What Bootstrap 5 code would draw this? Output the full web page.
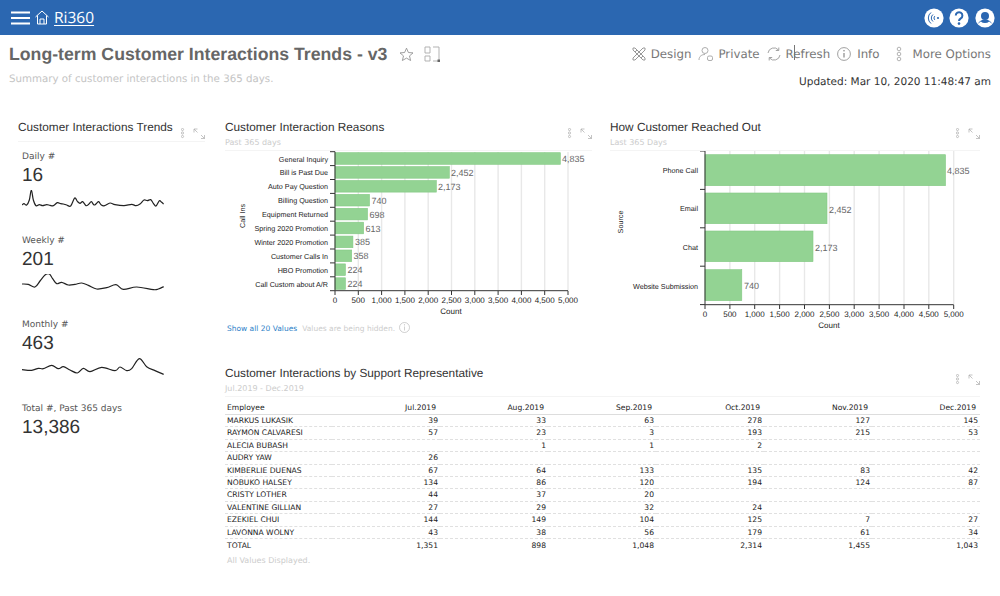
<!doctype html>
<html lang="en"><head><meta charset="utf-8"><title>Ri360</title>
<link rel="stylesheet" href="https://cdn.jsdelivr.net/npm/bootstrap@5.3.0/dist/css/bootstrap.min.css">
<style>
html,body{height:596px;overflow:hidden;background:#fff}
body{font-family:"DejaVu Sans",sans-serif;color:#444;text-rendering:geometricPrecision}
.topbar{height:35px;background:#2b67b1;padding:0 5px 0 10px}
.brand-link{font-size:15.5px;color:#fff;text-decoration:underline;font-family:"Open Sans",sans-serif;margin-left:5px;text-underline-offset:2px}
.pagehead{height:84px;padding:0 9px;position:relative}
.page-title{font:bold 17.7px "Liberation Sans",sans-serif;color:#666;margin:0;line-height:24px}
.page-sub{font-size:10.25px;color:#c4c4c4;margin-top:7px;line-height:13px}
.tool-txt{font-size:11.8px;color:#777;line-height:16px}
.updated{font-size:10.5px;color:#333;line-height:13px;margin-top:14px;text-align:right}
.caret-mark{position:absolute;left:794px;top:10px;width:1px;height:15px;background:#777}
.board{padding-left:18px;padding-right:20px;gap:20px}
.leftcol{width:187px;flex:none}
.rightcol{width:755px;flex:none}
.ptitle{font:11.8px/16px "Liberation Sans",sans-serif;color:#333;margin:0;white-space:nowrap}
.psub{font-size:8px;line-height:10px;color:#ccc;margin-top:3px}
.phead{height:32px;border-bottom:1px solid #f4f4f4}
.phead-left{height:23px;border-bottom:1px solid #f4f4f4}
.pico{margin-left:auto;display:block;flex:none;margin-top:9px}
.chartA{width:367px}.chartB{width:370px}
.chartsvg{display:block}
.chartsvg text{font-family:"Liberation Sans",sans-serif;font-size:8px;fill:#222}
.chartsvg .cat{font-size:7.2px}
.chartsvg .val{font-size:9px;fill:#666}
.bar{fill:#93d393;stroke:#82c882;stroke-width:.6}
.grid{stroke:#e8e8e8;stroke-width:1.4}
.ax{stroke:#333;stroke-width:1;fill:none}
.showline{font-size:7.5px;line-height:12px;margin-top:7px;padding-left:2px}
.showlink{color:#2d7fc8;text-decoration:none}
.hidden-note{color:#ccc;margin-left:5px}
.metric{height:84px;padding-left:4px}
.mlabel{font-size:9px;line-height:12px;color:#555}
.mnum{font:19px/24px "Liberation Sans",sans-serif;color:#333;margin-top:1px}
.spark{display:block;fill:none;stroke:#222;stroke-width:3.6px;stroke-linejoin:round;margin-top:2px}
.repsec{margin-top:30px}
.reptable{font-size:7.6px;color:#333;table-layout:fixed;width:755px;margin:0;--bs-table-bg:transparent}
.reptable th,.reptable td{padding:0 2px;line-height:11.4px;height:12.4px;border:0;border-bottom:1px dashed #e0e0e0;font-weight:400;color:#222;white-space:nowrap}
.reptable thead th{padding-bottom:1px;padding-top:4.5px;height:auto;border-bottom:1px solid #ddd}
.reptable th.hnum{padding-right:4px}
.reptable tfoot td{border-bottom:0;padding-top:0;height:13px}
.allvals{font-size:8px;color:#ccc;margin-top:5px;line-height:10px;padding-left:2px}
</style></head>
<body>
<nav class="navbar topbar d-flex align-items-center justify-content-between flex-nowrap">
 <div class="d-flex align-items-center">
  <svg width="20" height="14" viewBox="0 0 20 14" style="margin-left:1px"><path d="M0 1.5h19M0 7h19M0 12.5h19" stroke="#fff" stroke-width="2"/></svg>
  <svg width="14" height="15" viewBox="0 0 14 15" fill="none" stroke="#fff" stroke-width="1" style="margin-left:4px"><path d="M.5 7 7 1l6.500 6M2.500 5.500V14h9V5.500M5 14V9h4v5"/></svg>
  <a href="#" class="brand-link">Ri360</a>
 </div>
 <div class="d-flex align-items-center" style="gap:5.7px">
  <svg width="20" height="20" viewBox="0 0 20 20"><circle cx="10" cy="10" r="9.6" fill="#fff"/><g fill="none" stroke="#2b67b1" stroke-width="1"><path d="M9 6.5a4.5 4.5 0 0 0 0 7"/><path d="M7 4.5a7 7 0 0 0 0 11"/><path d="M11 8a2.5 2.5 0 0 0 0 4"/></g><circle cx="14" cy="10" r="1.1" fill="#2b67b1"/></svg>
  <svg width="20" height="20" viewBox="0 0 20 20"><circle cx="10" cy="10" r="9.6" fill="#fff"/><path d="M6.8 7.6a3.3 3.3 0 1 1 5 2.8c-1.2.8-1.8 1.3-1.8 2.6" fill="none" stroke="#2b67b1" stroke-width="2"/><circle cx="10" cy="15.6" r="1.3" fill="#2b67b1"/></svg>
  <svg width="20" height="20" viewBox="0 0 20 20"><circle cx="10" cy="10" r="9.6" fill="#fff"/><circle cx="10" cy="8" r="4" fill="#2b67b1"/><path d="M2.8 16a8 8 0 0 1 14.4 0 10 10 0 0 0-3-2.6 6 6 0 0 1-8.4 0 10 10 0 0 0-3 2.6z" fill="#2b67b1"/></svg>
 </div>
</nav>
<header class="pagehead d-flex justify-content-between">
 <div style="padding-top:7px">
  <div class="d-flex align-items-center">
   <h1 class="page-title">Long-term Customer Interactions Trends - v3</h1>
   <svg width="15" height="15" viewBox="0 0 15 15" fill="none" stroke="#888" stroke-width=".8" style="margin-left:12px"><path d="M7.5 1.2 9.4 5.500l4.600.4-3.500 3 1.100 4.600-4.100-2.400-4.100 2.400 1.100-4.600L1 5.900l4.600-.4z"/></svg>
   <svg width="17" height="17" viewBox="0 0 17 17" fill="none" stroke="#aaa" stroke-width=".9" style="margin-left:10px"><path d="M1 1h5v6H1zM1 10h5v5H1zM9 1h6v14H9"/><rect x="13.5" y="13.5" width="2.5" height="2.5" fill="#666" stroke="none"/></svg>
  </div>
  <p class="page-sub mb-0">Summary of customer interactions in the 365 days.</p>
 </div>
 <div style="padding-top:11px">
  <div class="d-flex align-items-center">
   <svg width="16" height="16" viewBox="0 0 16 16" fill="none" stroke="#999" stroke-width="1"><path d="M2 2h2l10 10v2h-2L2 4zM14 2h-2L2 12v2h2L14 4zM4 6 6 4M10 12l2-2"/></svg>
   <span class="tool-txt" style="margin-left:4px">Design</span>
   <svg width="16" height="16" viewBox="0 0 16 16" fill="none" stroke="#999" stroke-width=".8" style="margin-left:7px"><circle cx="7" cy="4.5" r="3"/><path d="M1 14c0-4 3-5.500 6-5.500"/><rect x="9.500" y="10" width="5" height="4.500" rx="1.500"/></svg>
   <span class="tool-txt" style="margin-left:4px">Private</span>
   <svg width="16" height="16" viewBox="0 0 16 16" fill="none" stroke="#999" stroke-width=".9" style="margin-left:6px"><path d="M2 7a6 6 0 0 1 10.500-3M14 9a6 6 0 0 1-10.500 3M12.800 1.500v3h-3M3.200 14.500v-3h3"/></svg>
   <span class="tool-txt" style="margin-left:4px">Refresh</span>
   <svg width="14" height="14" viewBox="0 0 14 14" fill="none" stroke="#888" stroke-width=".8" style="margin-left:7px"><circle cx="7" cy="7" r="6.4"/><path d="M7 6v4.500" stroke-width="1.2"/><circle cx="7" cy="3.800" r=".8" fill="#888" stroke="none"/></svg>
   <span class="tool-txt" style="margin-left:6px">Info</span>
   <svg width="6" height="16" viewBox="0 0 6 16" fill="none" stroke="#aaa" stroke-width=".9" style="margin-left:17px"><circle cx="3" cy="3" r="1.8"/><circle cx="3" cy="8" r="1.8"/><circle cx="3" cy="13" r="1.8"/></svg>
   <span class="tool-txt" style="margin-left:10px">More Options</span>
  </div>
  <div class="updated">Updated: Mar 10, 2020 11:48:47 am</div>
 </div>
 <span class="caret-mark"></span>
</header>
<main class="board d-flex">
 <section class="leftcol">
  <div class="d-flex phead-left">
   <h2 class="ptitle">Customer Interactions Trends</h2>
   <svg class="pico" width="24" height="11" viewBox="0 0 24 11" fill="none" stroke="#aaa" stroke-width=".7"><circle cx="1.500" cy="1.500" r="1.100"/><circle cx="1.500" cy="5" r="1.100"/><circle cx="1.500" cy="8.500" r="1.100"/><path d="M13 1h3.500M13 1v3.500M13 1l3.500 3.500M23.500 10.500H20M23.500 10.500V7M23.500 10.500 20 7"/></svg>
  </div>
  <div class="metric" style="margin-top:9px">
   <div class="mlabel">Daily #</div><div class="mnum">16</div>
   <svg class="spark" width="142" height="28" viewBox="0 0 426 84"><path d="M0 45 6 41 14 45 22 30 28 0 34 30 42 47 52 44 62 47 74 44 84 46 94 47 106 38 116 41 124 42 134 45 146 48 158 24 166 34 174 40 182 35 192 47 200 43 208 35 216 45 224 40 230 35 238 45 248 47 264 39 279 44 306 47 329 43 342 47 354 42 366 30 376 32 386 29 394 40 402 48 412 32 419 37 425 42"/></svg>
  </div>
  <div class="metric">
   <div class="mlabel">Weekly #</div><div class="mnum">201</div>
   <svg class="spark" width="142" height="28" viewBox="0 0 426 84"><path d="M0 30 19 31 39 39 54 21 69 3 82 0 92 14 104 29 119 25 139 33 159 31 179 27 199 34 224 45 254 41 282 32 304 46 344 39 394 47 409 45 425 38"/></svg>
  </div>
  <div class="metric">
   <div class="mlabel">Monthly #</div><div class="mnum">463</div>
   <svg class="spark" width="142" height="28" viewBox="0 0 426 84"><path d="M0 35 29 37 49 31 64 32 89 22 109 32 124 26 144 36 166 45 184 31 204 41 239 28 279 38 294 27 314 38 329 32 352 2 374 26 399 38 425 49"/></svg>
  </div>
  <div class="metric">
   <div class="mlabel">Total #, Past 365 days</div><div class="mnum">13,386</div>
  </div>
 </section>
 <section class="rightcol">
  <div class="d-flex" style="gap:18px">
   <div class="chartA">
    <div class="d-flex phead">
     <div><h2 class="ptitle">Customer Interaction Reasons</h2><div class="psub">Past 365 days</div></div>
     <svg class="pico" width="24" height="11" viewBox="0 0 24 11" fill="none" stroke="#aaa" stroke-width=".7"><circle cx="1.500" cy="1.500" r="1.100"/><circle cx="1.500" cy="5" r="1.100"/><circle cx="1.500" cy="8.500" r="1.100"/><path d="M13 1h3.500M13 1v3.500M13 1l3.500 3.500M23.500 10.500H20M23.500 10.500V7M23.500 10.500 20 7"/></svg>
    </div>
    <svg class="chartsvg" width="365" height="165" viewBox="0 0 365 165">
     <path class="grid" d="M133.300 1V140M156.600 1V140M179.900 1V140M203.200 1V140M226.500 1V140M249.800 1V140M273.100 1V140M296.400 1V140M319.700 1V140M343 1V140"/>
     <g class="bars">
      <rect class="bar" x="110" y="1.700" width="225.300" height="11.600"/><rect class="bar" x="110" y="15.600" width="114.300" height="11.600"/><rect class="bar" x="110" y="29.500" width="101.300" height="11.600"/><rect class="bar" x="110" y="43.400" width="34.500" height="11.600"/><rect class="bar" x="110" y="57.300" width="32.500" height="11.600"/><rect class="bar" x="110" y="71.200" width="28.600" height="11.600"/><rect class="bar" x="110" y="85.100" width="17.900" height="11.600"/><rect class="bar" x="110" y="99" width="16.700" height="11.600"/><rect class="bar" x="110" y="112.900" width="10.400" height="11.600"/><rect class="bar" x="110" y="126.800" width="10.400" height="11.600"/>
     </g>
     <path class="ax" d="M105 .7h5V139.700H343M105 14.600h5M105 28.500h5M105 42.400h5M105 56.300h5M105 70.200h5M105 84.100h5M105 98h5M105 111.900h5M105 125.800h5M105 139.700h5M110 140v4M133.300 140v4M156.600 140v4M179.900 140v4M203.200 140v4M226.500 140v4M249.800 140v4M273.100 140v4M296.400 140v4M319.700 140v4M343 140v4"/>
     <g text-anchor="end">
      <text class="cat" x="103" y="10.500">General Inquiry</text><text class="cat" x="103" y="24.400">Bill is Past Due</text><text class="cat" x="103" y="38.300">Auto Pay Question</text><text class="cat" x="103" y="52.200">Billing Question</text><text class="cat" x="103" y="66.100">Equipment Returned</text><text class="cat" x="103" y="80">Spring 2020 Promotion</text><text class="cat" x="103" y="93.900">Winter 2020 Promotion</text><text class="cat" x="103" y="107.800">Customer Calls In</text><text class="cat" x="103" y="121.700">HBO Promotion</text><text class="cat" x="103" y="135.600">Call Custom about A/R</text>
     </g>
     <g class="vals">
      <text class="val" x="337" y="11">4,835</text><text class="val" x="226" y="25">2,452</text><text class="val" x="213" y="39">2,173</text><text class="val" x="146.500" y="52.500">740</text><text class="val" x="144.500" y="66.500">698</text><text class="val" x="140.500" y="80.500">613</text><text class="val" x="130" y="94">385</text><text class="val" x="128.500" y="108">358</text><text class="val" x="122.500" y="122">224</text><text class="val" x="122.500" y="136">224</text>
     </g>
     <g text-anchor="middle">
      <text x="110" y="152">0</text><text x="133.300" y="152">500</text><text x="156.600" y="152">1,000</text><text x="179.900" y="152">1,500</text><text x="203.200" y="152">2,000</text><text x="226.500" y="152">2,500</text><text x="249.800" y="152">3,000</text><text x="273.100" y="152">3,500</text><text x="296.400" y="152">4,000</text><text x="319.700" y="152">4,500</text><text x="343" y="152">5,000</text>
      <text x="226" y="163">Count</text>
      <text class="cat" transform="translate(20 65) rotate(-90)">Call Ins</text>
     </g>
    </svg>
    <div class="showline d-flex align-items-center"><a href="#" class="showlink">Show all 20 Values</a><span class="hidden-note">Values are being hidden.</span>
     <svg width="11" height="11" viewBox="0 0 11 11" fill="none" stroke="#bbb" stroke-width=".7" style="margin-left:4px;margin-top:-3px"><circle cx="5.500" cy="5.500" r="5"/><path d="M5.500 4.500v4"/><circle cx="5.500" cy="2.800" r=".6" fill="#bbb" stroke="none"/></svg></div>
   </div>
   <div class="chartB">
    <div class="d-flex phead">
     <div><h2 class="ptitle">How Customer Reached Out</h2><div class="psub">Last 365 Days</div></div>
     <svg class="pico" width="24" height="11" viewBox="0 0 24 11" fill="none" stroke="#aaa" stroke-width=".7"><circle cx="1.500" cy="1.500" r="1.100"/><circle cx="1.500" cy="5" r="1.100"/><circle cx="1.500" cy="8.500" r="1.100"/><path d="M13 1h3.500M13 1v3.500M13 1l3.500 3.500M23.500 10.500H20M23.500 10.500V7M23.500 10.500 20 7"/></svg>
    </div>
    <svg class="chartsvg" width="370" height="182" viewBox="0 0 370 182">
     <path class="grid" d="M119.900 0V154M144.700 0V154M169.600 0V154M194.500 0V154M219.400 0V154M244.200 0V154M269.100 0V154M294 0V154M318.800 0V154M343.700 0V154"/>
     <rect class="bar" x="95" y="3.700" width="240.500" height="31"/><rect class="bar" x="95" y="42" width="122" height="30.700"/><rect class="bar" x="95" y="80" width="108" height="30.700"/><rect class="bar" x="95" y="118.700" width="36.800" height="31"/>
     <path class="ax" d="M90 0h5V153.700H343.700M90 38.400h5M90 76.800h5M90 115.200h5M90 153.600h5M95 154v4M119.900 154v4M144.700 154v4M169.600 154v4M194.500 154v4M219.400 154v4M244.200 154v4M269.100 154v4M294 154v4M318.800 154v4M343.700 154v4"/>
     <g text-anchor="end"><text class="cat" x="88" y="22">Phone Call</text><text class="cat" x="88" y="60">Email</text><text class="cat" x="88" y="99">Chat</text><text class="cat" x="88" y="137.500">Website Submission</text></g>
     <text class="val" x="337" y="23">4,835</text><text class="val" x="219" y="61.500">2,452</text><text class="val" x="205" y="100">2,173</text><text class="val" x="134" y="138">740</text>
     <g text-anchor="middle">
      <text x="95" y="166">0</text><text x="119.900" y="166">500</text><text x="144.700" y="166">1,000</text><text x="169.600" y="166">1,500</text><text x="194.500" y="166">2,000</text><text x="219.400" y="166">2,500</text><text x="244.200" y="166">3,000</text><text x="269.100" y="166">3,500</text><text x="294" y="166">4,000</text><text x="318.800" y="166">4,500</text><text x="343.700" y="166">5,000</text>
      <text x="219" y="177">Count</text>
      <text class="cat" transform="translate(13 71) rotate(-90)">Source</text>
     </g>
    </svg>
   </div>
  </div>
  <div class="repsec">
   <div class="d-flex phead">
    <div><h2 class="ptitle">Customer Interactions by Support Representative</h2><div class="psub">Jul.2019 - Dec.2019</div></div>
    <svg class="pico" width="24" height="11" viewBox="0 0 24 11" fill="none" stroke="#aaa" stroke-width=".7"><circle cx="1.500" cy="1.500" r="1.100"/><circle cx="1.500" cy="5" r="1.100"/><circle cx="1.500" cy="8.500" r="1.100"/><path d="M13 1h3.500M13 1v3.500M13 1l3.500 3.500M23.500 10.500H20M23.500 10.500V7M23.500 10.500 20 7"/></svg>
   </div>
   <table class="table reptable">
    <colgroup><col style="width:107px"><col style="width:108px"><col style="width:108px"><col style="width:108px"><col style="width:108px"><col style="width:108px"><col style="width:108px"></colgroup>
    <thead><tr><th>Employee</th><th class="hnum text-end">Jul.2019</th><th class="hnum text-end">Aug.2019</th><th class="hnum text-end">Sep.2019</th><th class="hnum text-end">Oct.2019</th><th class="hnum text-end">Nov.2019</th><th class="hnum text-end">Dec.2019</th></tr></thead>
    <tbody class="text-end">
    <tr><td class="text-start">MARKUS LUKASIK</td><td>39</td><td>33</td><td>63</td><td>278</td><td>127</td><td>145</td></tr>
    <tr><td class="text-start">RAYMON CALVARESI</td><td>57</td><td>23</td><td>3</td><td>193</td><td>215</td><td>53</td></tr>
    <tr><td class="text-start">ALECIA BUBASH</td><td></td><td>1</td><td>1</td><td>2</td><td></td><td></td></tr>
    <tr><td class="text-start">AUDRY YAW</td><td>26</td><td></td><td></td><td></td><td></td><td></td></tr>
    <tr><td class="text-start">KIMBERLIE DUENAS</td><td>67</td><td>64</td><td>133</td><td>135</td><td>83</td><td>42</td></tr>
    <tr><td class="text-start">NOBUKO HALSEY</td><td>134</td><td>86</td><td>120</td><td>194</td><td>124</td><td>87</td></tr>
    <tr><td class="text-start">CRISTY LOTHER</td><td>44</td><td>37</td><td>20</td><td></td><td></td><td></td></tr>
    <tr><td class="text-start">VALENTINE GILLIAN</td><td>27</td><td>29</td><td>32</td><td>24</td><td></td><td></td></tr>
    <tr><td class="text-start">EZEKIEL CHUI</td><td>144</td><td>149</td><td>104</td><td>125</td><td>7</td><td>27</td></tr>
    <tr><td class="text-start">LAVONNA WOLNY</td><td>43</td><td>38</td><td>56</td><td>179</td><td>61</td><td>34</td></tr>
    </tbody>
    <tfoot class="text-end"><tr><td class="text-start">TOTAL</td><td>1,351</td><td>898</td><td>1,048</td><td>2,314</td><td>1,455</td><td>1,043</td></tr></tfoot>
   </table>
   <div class="allvals">All Values Displayed.</div>
  </div>
 </section>
</main>
<script>
document.querySelectorAll('.spark path').forEach(function(p){
 var n=p.getAttribute('d').match(/[\d.]+/g).map(Number),P=[];
 for(var i=0;i<n.length;i+=2)P.push([n[i],n[i+1]]);
 var d='M'+P[0];
 for(i=0;i<P.length-1;i++){
  var a=P[Math.max(i-1,0)],b=P[i],c=P[i+1],e=P[Math.min(i+2,P.length-1)];
  d+='C'+(b[0]+(c[0]-a[0])/6)+' '+(b[1]+(c[1]-a[1])/6)+' '+(c[0]-(e[0]-b[0])/6)+' '+(c[1]-(e[1]-b[1])/6)+' '+c[0]+' '+c[1];
 }
 p.setAttribute('d',d);
});
</script>
</body></html>
